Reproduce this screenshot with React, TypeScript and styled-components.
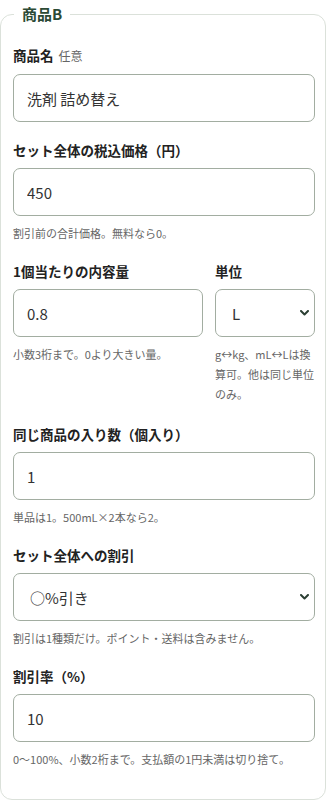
import React from "react";
import styled, { createGlobalStyle } from "styled-components";

const Global = createGlobalStyle`
  html, body { margin: 0; padding: 0; background: #ffffff; }
  body {
    font-family: "Noto Sans CJK JP", "Noto Sans", sans-serif;
    color: #222;
  }
  * { box-sizing: border-box; }
`;

const Page = styled.div`
  width: 328px;
  padding: 4px 2px 2px 0;
`;

const Fieldset = styled.fieldset`
  margin: 0;
  width: 326px;
  border: 1px solid #dbe1da;
  border-radius: 12px;
  padding: 21px 10px 30px 12px;
  min-width: 0;
`;

const Legend = styled.legend`
  padding: 0 8px;
  margin-left: 1px;
  font-size: 15px;
  line-height: 20px;
  font-weight: 700;
  color: #2c4a35;
`;

const Field = styled.div<{ $last?: boolean }>`
  display: flex;
  flex-direction: column;
  margin-bottom: ${(p) => (p.$last ? "0" : "18px")};
  min-width: 0;
`;

const Row = styled.div`
  display: grid;
  grid-template-columns: 1fr 100px;
  column-gap: 12px;
  margin-bottom: 20px;
`;

const Label = styled.label`
  font-size: 13.5px;
  line-height: 20px;
  font-weight: 700;
  color: #222;
  margin-bottom: 8px;
`;

const Optional = styled.span`
  font-size: 12px;
  font-weight: 400;
  color: #666;
  margin-left: 5px;
`;

const TextInput = styled.input`
  width: 100%;
  height: 48px;
  border: 1px solid #a2ada1;
  border-radius: 7px;
  padding: 0 13px;
  font-family: inherit;
  font-size: 15px;
  color: #333;
  background: #fff;
  outline: none;
`;

const SelectWrap = styled.div`
  position: relative;
  width: 100%;
`;

const Select = styled.select`
  width: 100%;
  height: 48px;
  border: 1px solid #a2ada1;
  border-radius: 7px;
  padding: 0 28px 0 16px;
  font-family: inherit;
  font-size: 15px;
  color: #333;
  background: #fff;
  appearance: none;
  -webkit-appearance: none;
  outline: none;
`;

const Chevron = styled.svg`
  position: absolute;
  right: 6px;
  top: 50%;
  width: 9px;
  height: 6px;
  margin-top: -3px;
  pointer-events: none;
`;

const Hint = styled.p`
  margin: 7px 0 0;
  font-size: 11px;
  line-height: 20px;
  color: #666;
`;

const Arrow = () => (
  <Chevron viewBox="0 0 9 6">
    <path d="M1 1 L4.5 4.5 L8 1" fill="none" stroke="#2b3f33" strokeWidth="2" strokeLinecap="round" strokeLinejoin="round" />
  </Chevron>
);

export default function App() {
  return (
    <>
      <Global />
      <Page>
        <Fieldset>
          <Legend>商品B</Legend>

          <Field>
            <Label>
              商品名<Optional>任意</Optional>
            </Label>
            <TextInput defaultValue="洗剤 詰め替え" />
          </Field>

          <Field>
            <Label>セット全体の税込価格（円）</Label>
            <TextInput defaultValue="450" />
            <Hint>割引前の合計価格。無料なら0。</Hint>
          </Field>

          <Row>
            <Field $last>
              <Label>1個当たりの内容量</Label>
              <TextInput defaultValue="0.8" />
              <Hint>小数3桁まで。0より大きい量。</Hint>
            </Field>
            <Field $last>
              <Label>単位</Label>
              <SelectWrap>
                <Select defaultValue="L">
                  <option value="g">g</option>
                  <option value="kg">kg</option>
                  <option value="mL">mL</option>
                  <option value="L">L</option>
                  <option value="個">個</option>
                </Select>
                <Arrow />
              </SelectWrap>
              <Hint>g↔kg、mL↔Lは換算可。他は同じ単位のみ。</Hint>
            </Field>
          </Row>

          <Field>
            <Label>同じ商品の入り数（個入り）</Label>
            <TextInput defaultValue="1" />
            <Hint>単品は1。500mL×2本なら2。</Hint>
          </Field>

          <Field>
            <Label>セット全体への割引</Label>
            <SelectWrap>
              <Select defaultValue="pct">
                <option value="none">割引なし</option>
                <option value="pct">○%引き</option>
                <option value="yen">○円引き</option>
              </Select>
              <Arrow />
            </SelectWrap>
            <Hint>割引は1種類だけ。ポイント・送料は含みません。</Hint>
          </Field>

          <Field $last>
            <Label>割引率（%）</Label>
            <TextInput defaultValue="10" />
            <Hint>0〜100%、小数2桁まで。支払額の1円未満は切り捨て。</Hint>
          </Field>
        </Fieldset>
      </Page>
    </>
  );
}
